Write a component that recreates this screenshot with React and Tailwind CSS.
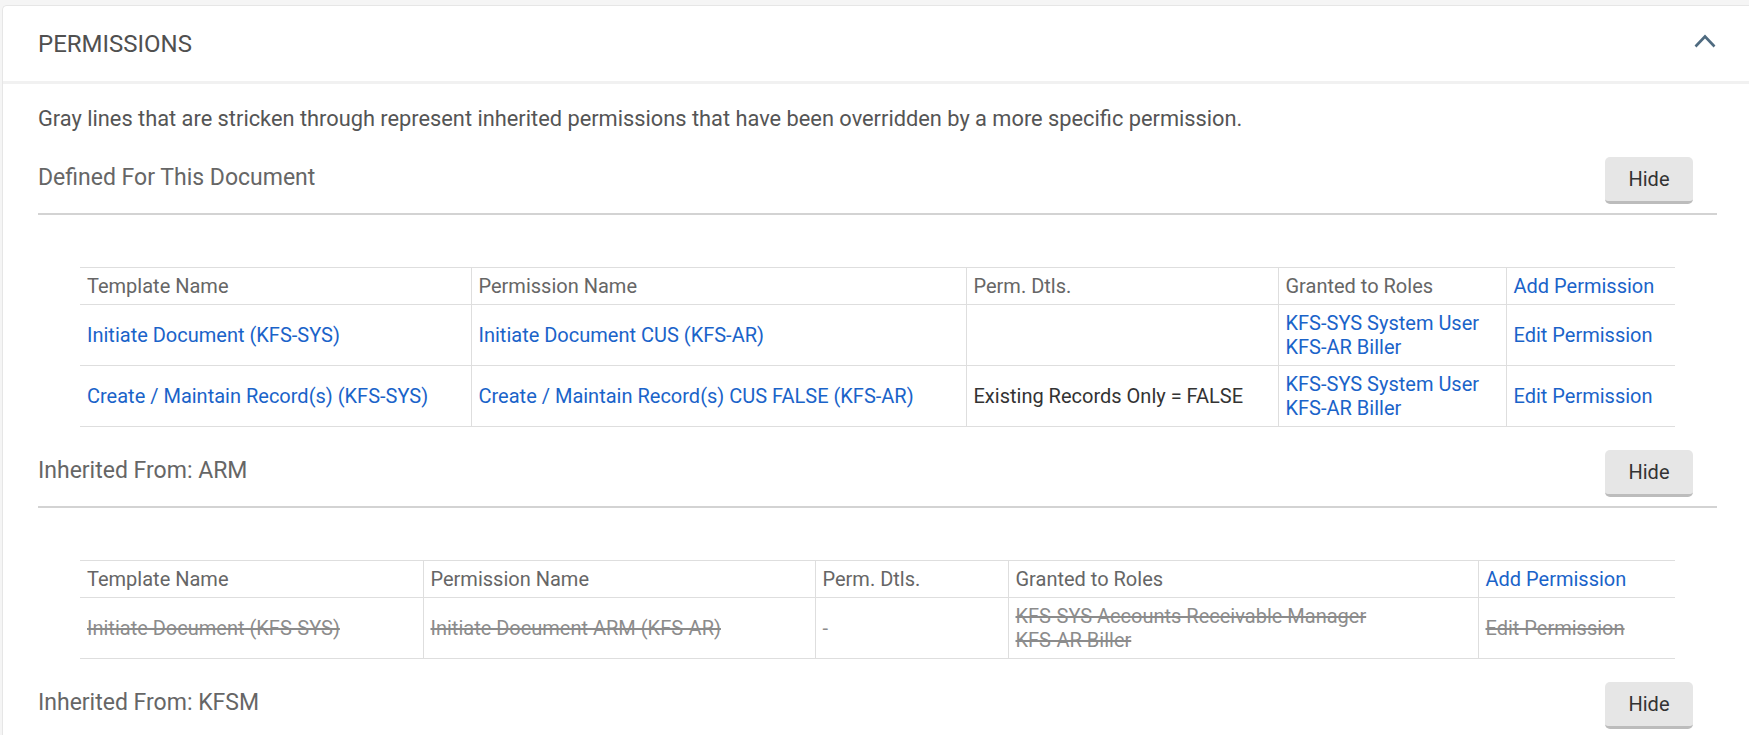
import React from "react";

const LINK = "text-[#1a63c9]";

function Chevron() {
  return (
    <svg width="22" height="14" viewBox="0 0 22 14" fill="none">
      <polyline points="1.5,12.5 11,2.5 20.5,12.5" stroke="#4f6b80" strokeWidth="2.6" strokeLinejoin="miter" />
    </svg>
  );
}

function SectionHeader({ title }) {
  return (
    <div className="mt-[23px]">
      <div className="flex items-start justify-between">
        <div className="mt-[5px] text-[23px] leading-[32px] text-[#666666]">{title}</div>
        <button className="mr-[24px] h-[47px] w-[88px] rounded-[5px] border-b-[3px] border-[#bcbcbc] bg-[#e6e6e6] text-[20px] leading-[44px] text-[#333333]">
          Hide
        </button>
      </div>
      <div className="mt-[9px] h-[2px] bg-[#d3d3d3]" />
    </div>
  );
}

function Th({ children, w, last, link }) {
  return (
    <th
      style={{ width: w }}
      className={`px-[7px] py-[6px] text-left align-middle font-normal leading-[24px] ${link ? LINK : "text-[#666666]"} ${last ? "" : "border-r border-[#dedede]"}`}
    >
      {children}
    </th>
  );
}

function Td({ children, last, cls = "" }) {
  return (
    <td className={`px-[7px] py-[6px] align-middle leading-[24px] ${last ? "" : "border-r border-[#dedede]"} ${cls}`}>
      {children}
    </td>
  );
}

function Table({ widths, rows }) {
  const heads = ["Template Name", "Permission Name", "Perm. Dtls.", "Granted to Roles"];
  return (
    <div className="mx-[42px] mt-[52px]">
      <table className="w-full table-fixed border-collapse text-[20px]">
        <thead>
          <tr className="border-t border-b border-[#dedede] h-[37px]">
            {heads.map((h, i) => (
              <Th key={h} w={widths[i]}>
                {h}
              </Th>
            ))}
            <Th w={widths[4]} last link>
              Add Permission
            </Th>
          </tr>
        </thead>
        <tbody>{rows}</tbody>
      </table>
    </div>
  );
}

export default function App() {
  const strike = "line-through text-[#8c8c8c]";
  return (
    <div
      className="h-[735px] overflow-hidden bg-[#f5f5f5] pl-[2px] pt-[5px]"
      style={{ fontFamily: "Roboto, 'Noto Sans', sans-serif" }}
    >
      <div className="min-h-[800px] rounded-tl-[5px] border-l border-t border-[#e6e6e6] bg-white">
        <div className="flex h-[75px] items-center justify-between pl-[35px] pr-[33px]">
          <div className="text-[24px] text-[#505050]">PERMISSIONS</div>
          <div className="mb-[6px]">
            <Chevron />
          </div>
        </div>
        <div className="h-[3px] bg-[#f1f1f1]" />
        <div className="pl-[35px] pr-[32px]">
          <p className="pt-[20px] text-[21.8px] leading-[30px] text-[#555555]">
            Gray lines that are stricken through represent inherited permissions that have been overridden by a more specific permission.
          </p>

          <SectionHeader title="Defined For This Document" />
          <Table
            widths={["391px", "495px", "312px", "228px", "169px"]}
            rows={
              <>
                <tr className="border-b border-[#dedede] h-[61px]">
                  <Td cls={LINK}>Initiate Document (KFS-SYS)</Td>
                  <Td cls={LINK}>Initiate Document CUS (KFS-AR)</Td>
                  <Td></Td>
                  <Td cls={LINK}>
                    <div>KFS-SYS System User</div>
                    <div>KFS-AR Biller</div>
                  </Td>
                  <Td last cls={LINK}>Edit Permission</Td>
                </tr>
                <tr className="border-b border-[#dedede] h-[61px]">
                  <Td cls={LINK}>Create / Maintain Record(s) (KFS-SYS)</Td>
                  <Td cls={LINK}>Create / Maintain Record(s) CUS FALSE (KFS-AR)</Td>
                  <Td cls="text-[#333333]">Existing Records Only = FALSE</Td>
                  <Td cls={LINK}>
                    <div>KFS-SYS System User</div>
                    <div>KFS-AR Biller</div>
                  </Td>
                  <Td last cls={LINK}>Edit Permission</Td>
                </tr>
              </>
            }
          />

          <SectionHeader title="Inherited From: ARM" />
          <Table
            widths={["343px", "392px", "193px", "470px", "197px"]}
            rows={
              <tr className="border-b border-[#dedede] h-[61px]">
                <Td cls={strike}>Initiate Document (KFS-SYS)</Td>
                <Td cls={strike}>Initiate Document ARM (KFS-AR)</Td>
                <Td cls="text-[#8c8c8c]">-</Td>
                <Td cls={strike}>
                  <div>KFS-SYS Accounts Receivable Manager</div>
                  <div>KFS-AR Biller</div>
                </Td>
                <Td last cls={strike}>Edit Permission</Td>
              </tr>
            }
          />

          <SectionHeader title="Inherited From: KFSM" />
        </div>
      </div>
    </div>
  );
}
